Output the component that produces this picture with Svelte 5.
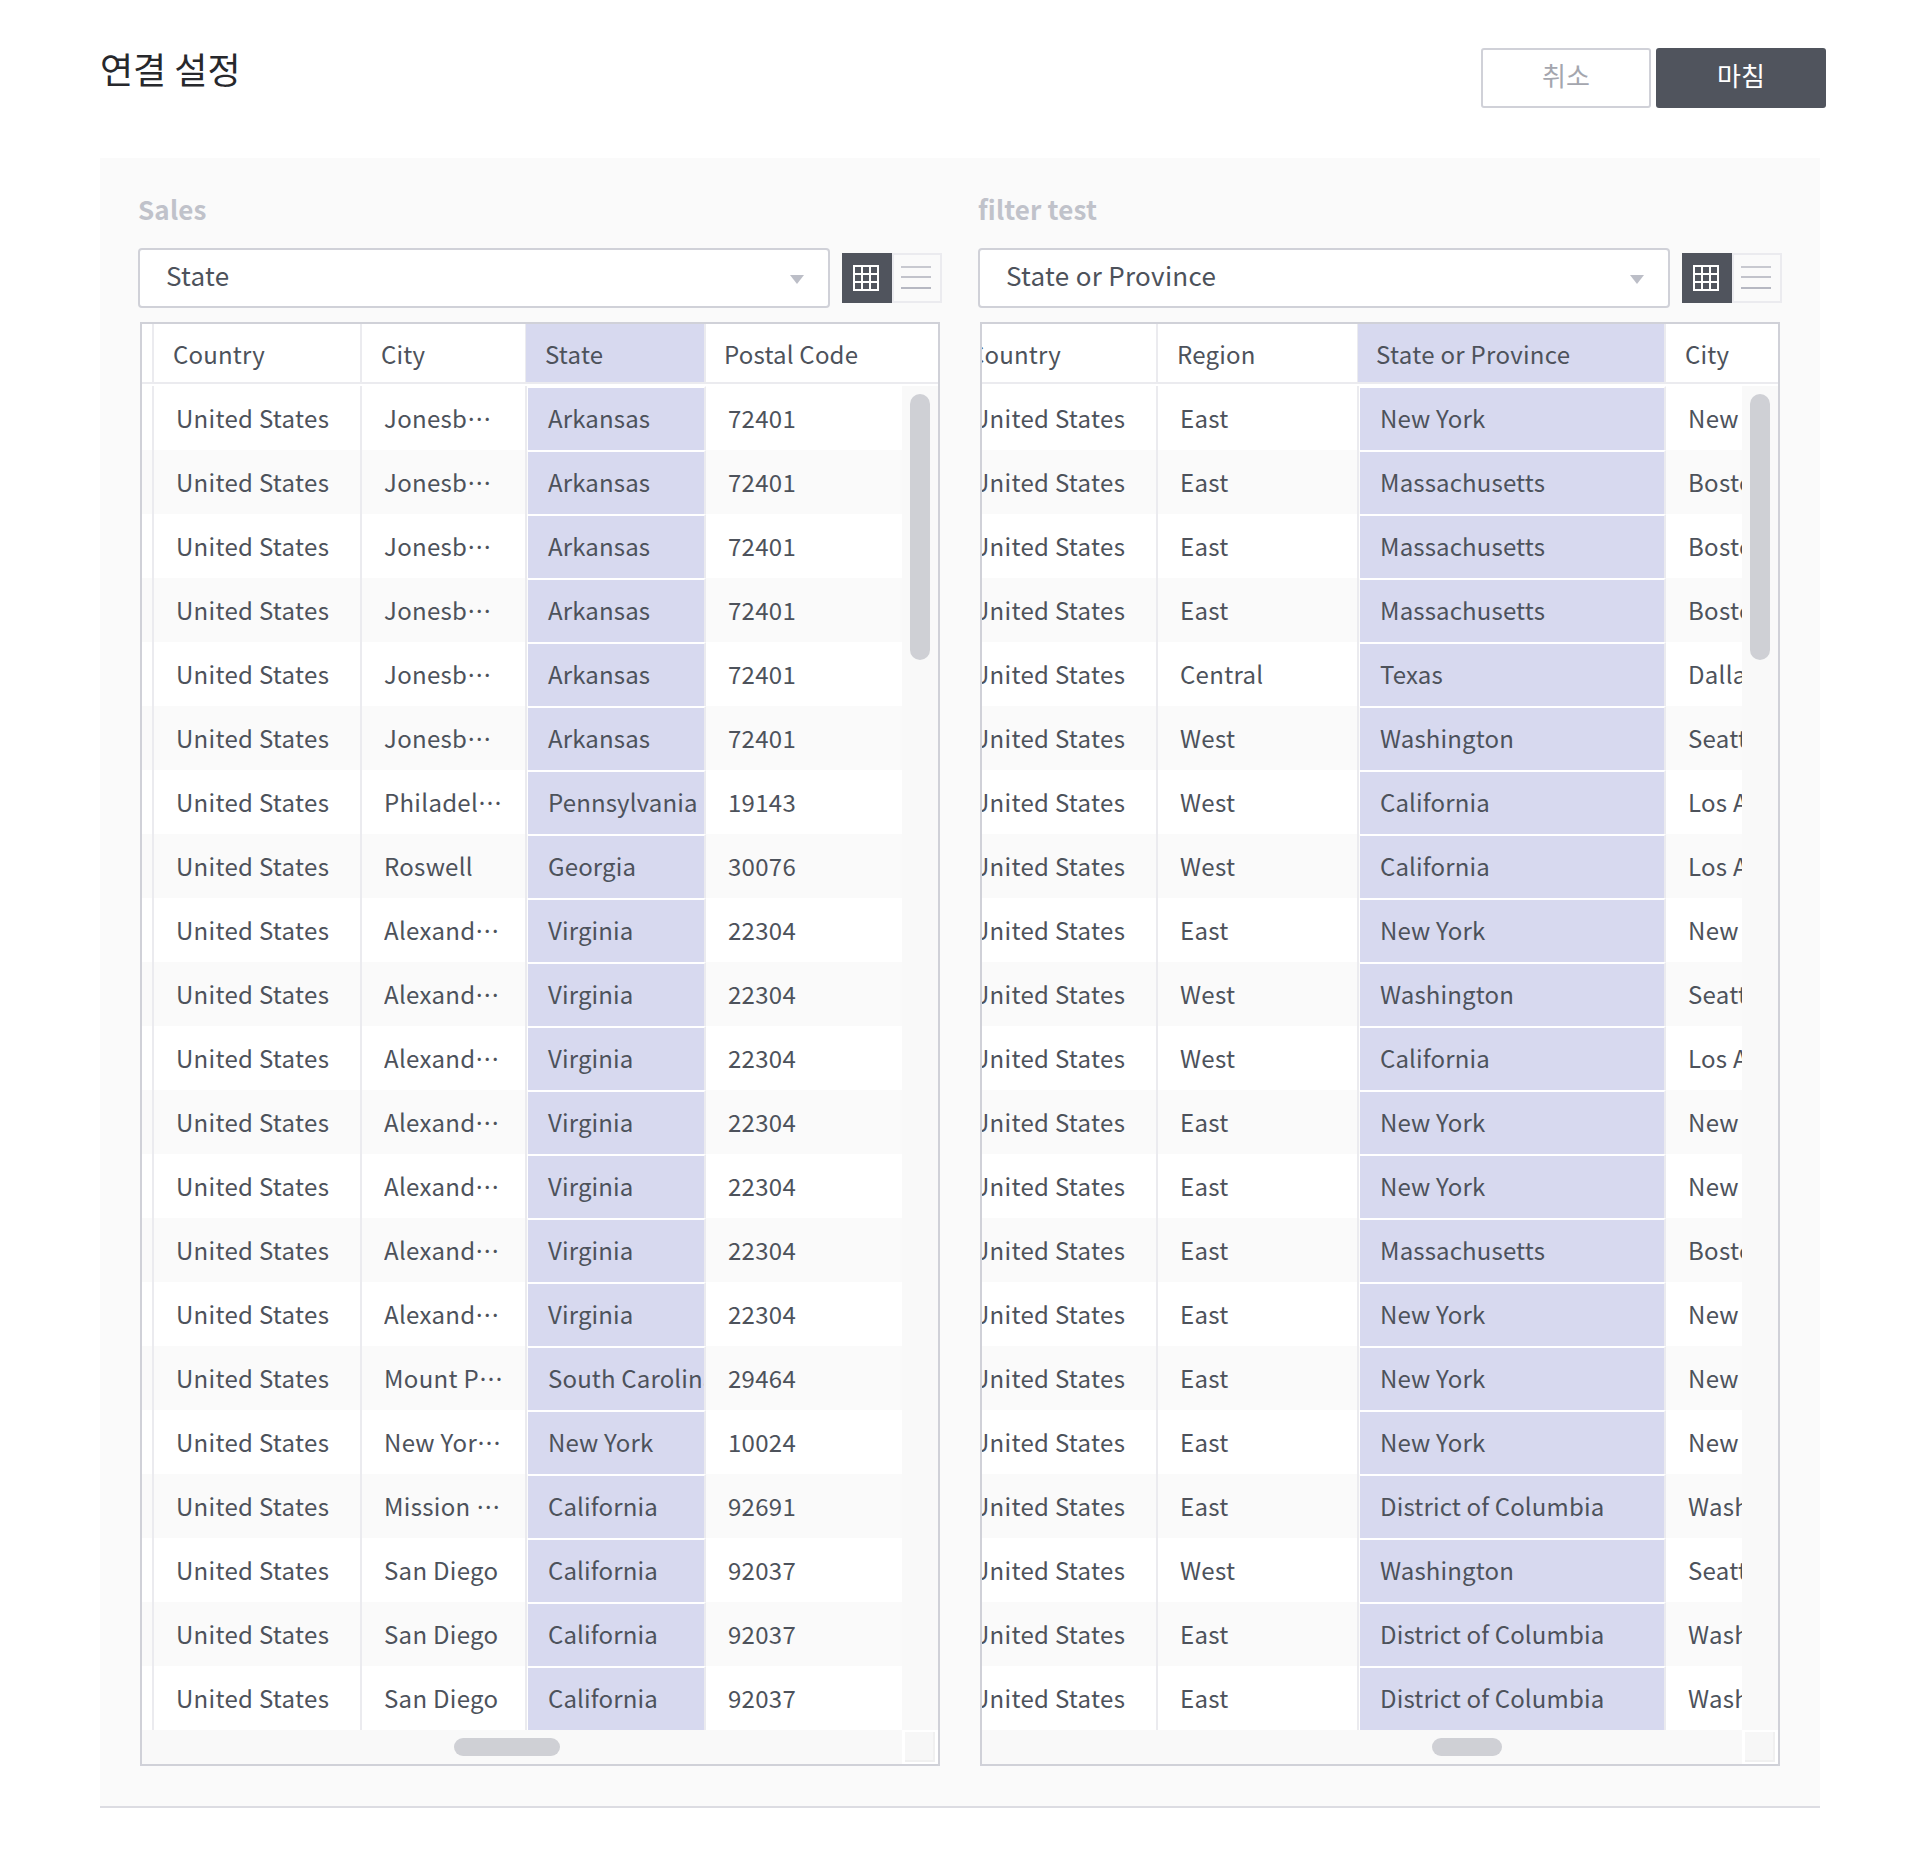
<script>
  const rep = (a, n) => Array.from({ length: n }, () => a);
  const left = {
    name: 'Sales', field: 'State', cls: 'left',
    heads: ['', 'Country', 'City', 'State', 'Postal Code'],
    sel: 3,
    rows: [
      ...rep(['', 'United States', 'Jonesboro', 'Arkansas', '72401'], 6),
      ['', 'United States', 'Philadelphia', 'Pennsylvania', '19143'],
      ['', 'United States', 'Roswell', 'Georgia', '30076'],
      ...rep(['', 'United States', 'Alexandria', 'Virginia', '22304'], 7),
      ['', 'United States', 'Mount Pleasant', 'South Carolina', '29464'],
      ['', 'United States', 'New York City', 'New York', '10024'],
      ['', 'United States', 'Mission Viejo', 'California', '92691'],
      ...rep(['', 'United States', 'San Diego', 'California', '92037'], 3)
    ]
  };
  const r = (region, state, city) => ['United States', region, state, city];
  const ny = r('East', 'New York', 'New York City');
  const ma = r('East', 'Massachusetts', 'Boston');
  const wa = r('West', 'Washington', 'Seattle');
  const ca = r('West', 'California', 'Los Angeles');
  const dc = r('East', 'District of Columbia', 'Washington');
  const right = {
    name: 'filter test', field: 'State or Province', cls: 'right',
    heads: ['Country', 'Region', 'State or Province', 'City'],
    sel: 2,
    rows: [ny, ma, ma, ma, r('Central', 'Texas', 'Dallas'), wa, ca, ca, ny, wa, ca, ny, ny, ma, ny, ny, ny, dc, wa, dc, dc]
  };
  const tables = [left, right];
</script>

<div class="page">
  <header class="top">
    <h1>연결 설정</h1>
    <div class="actions">
      <button class="btn ghost">취소</button>
      <button class="btn solid">마침</button>
    </div>
  </header>

  <main class="panel">
    {#each tables as t}
      <section class="side {t.cls}">
        <h2>{t.name}</h2>
        <div class="controls">
          <div class="select">
            <span>{t.field}</span>
            <svg class="caret" width="14" height="9" viewBox="0 0 14 9"><path d="M0 0h14L7 9z" fill="#bcbec7" /></svg>
          </div>
          <div class="toggle">
            <div class="tg on">
              <svg width="26" height="26" viewBox="0 0 26 26">
                <rect width="26" height="26" fill="#fff" />
                {#each [2, 10, 18] as y}
                  {#each [2, 10, 18] as x}
                    <rect {x} {y} width="6" height="6" fill="#50545d" />
                  {/each}
                {/each}
              </svg>
            </div>
            <div class="tg off">
              <svg width="30" height="24" viewBox="0 0 30 24">
                <rect y="0" width="30" height="2" fill="#c8c9d0" />
                <rect y="10" width="30" height="2" fill="#c2c3cb" />
                <rect y="21" width="30" height="2" fill="#b6b8c2" />
              </svg>
            </div>
          </div>
        </div>

        <div class="table">
          <div class="headclip">
            <div class="track cols head">
              {#each t.heads as h, i}
                <div class="hc" class:sel={i === t.sel} class:spacer={h === ''}>{h}</div>
              {/each}
            </div>
          </div>
          <div class="gapline"></div>
          <div class="body">
            <div class="track">
              {#each t.rows as row}
                <div class="cols row">
                  {#each row as c, i}
                    <div class="dc" class:sel={i === t.sel} class:spacer={c === ''} class:city={t.cls === 'left' && i === 2}>
                      <span>{c}</span>
                    </div>
                  {/each}
                </div>
              {/each}
            </div>
          </div>
          <div class="vbar"><div class="vthumb"></div></div>
          <div class="hbar"><div class="hthumb"></div></div>
          <div class="corner"><div class="cornerbox"></div></div>
        </div>
      </section>
    {/each}
  </main>
</div>

<style>
  :global(body) {
    margin: 0;
    background: #fff;
    font-family: "Noto Sans CJK KR", "Noto Sans", sans-serif;
    color: #4d525b;
  }
  .page { width: 1918px; height: 1864px; }
  .top {
    display: flex;
    justify-content: space-between;
    padding: 48px 92px 0 100px;
    height: 60px;
  }
  h1 {
    margin: -5px 0 0;
    font-size: 36px;
    font-weight: 400;
    line-height: 50px;
    color: #27282c;
  }
  .actions { display: flex; gap: 5px; }
  .btn {
    width: 170px;
    height: 60px;
    border-radius: 3px;
    font: inherit;
    font-size: 26px;
    padding: 0 0 8px;
  }
  .ghost { background: #fff; border: 2px solid #d0d1d8; color: #a4a6ae; }
  .solid { background: #50545d; border: 0; color: #fff; }
  .panel {
    margin: 50px 98px 0 100px;
    height: 1648px;
    background: #fafafa;
    border-bottom: 2px solid #dcdce2;
    padding-left: 38px;
    display: flex;
    gap: 36px;
  }
  .side { width: 804px; letter-spacing: .3px; }
  h2 {
    margin: 0;
    padding-top: 33px;
    height: 57px;
    font-size: 26px;
    line-height: 36px;
    font-weight: 700;
    letter-spacing: .15px;
    color: #c0c2ca;
  }
  .controls { display: flex; align-items: center; gap: 12px; height: 60px; }
  .select {
    box-sizing: border-box;
    width: 692px;
    height: 60px;
    background: #fff;
    border: 2px solid #d0d1d8;
    border-radius: 4px;
    display: flex;
    align-items: center;
    justify-content: space-between;
    padding: 0 24px 7px 26px;
    font-size: 26px;
  }
  .caret { margin-top: 9px; }
  .toggle { display: flex; }
  .tg {
    box-sizing: border-box;
    width: 50px;
    height: 50px;
    display: flex;
    align-items: center;
    justify-content: center;
  }
  .on { background: #50545d; padding-right: 2px; }
  .off { border: 2px solid #ebebef; padding-right: 2px; }

  .table {
    box-sizing: border-box;
    margin: 14px 0 0 2px;
    width: 800px;
    height: 1444px;
    border: 2px solid #d0d1d8;
    background: #f9f9f9;
    display: grid;
    grid-template-columns: 760px 36px;
    grid-template-rows: 60px 2px 1344px 34px;
  }
  .headclip {
    grid-column: 1 / 3;
    overflow: hidden;
    background: #fff;
    border-bottom: 2px solid #ebebef;
    height: 58px;
  }
  .gapline { grid-column: 1 / 3; background: #fff; }
  .body { overflow: hidden; }
  .cols { display: grid; }
  .left .cols { grid-template-columns: 12px 208px 165px 179px 1fr; }
  .right .cols { grid-template-columns: 208px 201px 307px 1fr; }
  .right .track { margin-left: -32px; }
  .hc {
    box-sizing: border-box;
    height: 58px;
    line-height: 60px;
    padding-left: 19px;
    font-size: 24px;
    letter-spacing: .2px;
    white-space: nowrap;
    border-right: 2px solid #ebebef;
  }
  .hc:last-child { border-right: 0; }
  .left .hc:last-child { padding-left: 18px; }
  .hc.sel { background: #d7d9ef; margin-left: -1px; }
  .right .hc.sel { padding-left: 18px; letter-spacing: .3px; }
  .row { height: 64px; background: #fff; }
  .row:nth-child(even) { background: #fafafa; }
  .dc {
    box-sizing: border-box;
    height: 64px;
    line-height: 63px;
    padding-left: 22px;
    font-size: 24px;
    white-space: nowrap;
    overflow: hidden;
    border-right: 2px solid #ebebef;
  }
  .dc:last-child { border-right: 0; }
  .dc.spacer, .hc.spacer { padding: 0; }
  .dc.sel {
    background: #d7d9ef;
    background-clip: padding-box;
    border-top: 2px solid #fff;
    border-left: 1px solid transparent;
    line-height: 59px;
    padding-left: 20px;
    letter-spacing: .15px;
    border-right-color: #ebebef;
  }
  .dc.city span {
    display: block;
    width: 120px;
    overflow: hidden;
    text-overflow: ellipsis;
  }
  .vbar { padding: 8px 0 0 8px; }
  .vthumb { width: 20px; height: 266px; border-radius: 10px; background: #cfd0d5; }
  .hbar { padding: 8px 0 0 312px; }
  .right .hbar { padding-left: 450px; }
  .hthumb { width: 106px; height: 18px; border-radius: 9px; background: #cfd0d5; }
  .right .hthumb { width: 70px; }
  .corner { background: #fff; padding: 2px 0 0 3px; }
  .cornerbox {
    box-sizing: border-box;
    width: 30px;
    height: 30px;
    background: #f7f7f7;
    border-right: 2px solid #f0f0f0;
    border-bottom: 2px solid #f0f0f0;
  }
</style>
